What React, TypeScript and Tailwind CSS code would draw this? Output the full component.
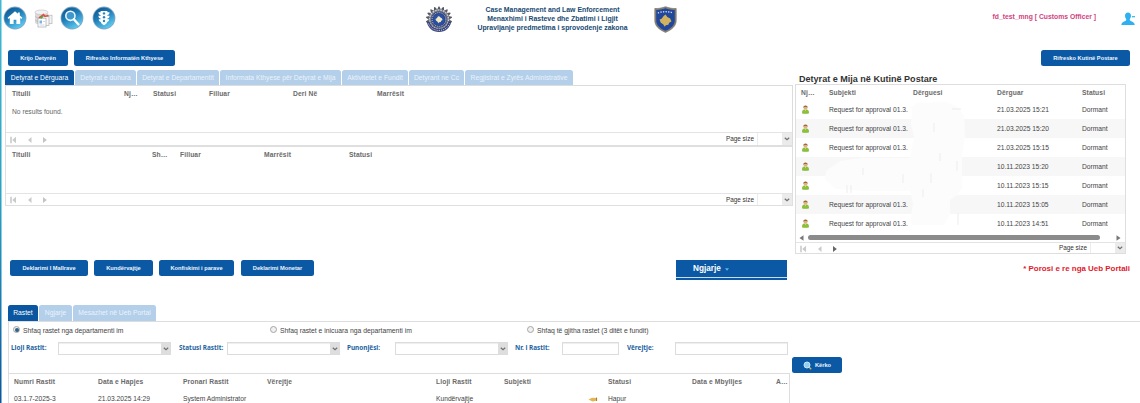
import React from "react";

function GlossyIcon({ id, children }: { id: string; children: React.ReactNode }) {
  return (
    <svg width="24" height="24" viewBox="0 0 24 24" className="shrink-0">
      <defs>
        <linearGradient id={id} x1="0" y1="0" x2="0.6" y2="1">
          <stop offset="0" stopColor="#0d4f86" />
          <stop offset="0.5" stopColor="#1f7db8" />
          <stop offset="1" stopColor="#5cc8ee" />
        </linearGradient>
      </defs>
      <circle cx="12" cy="12" r="11.4" fill="#7fa6c4" />
      <circle cx="12" cy="12" r="10.6" fill={`url(#${id})`} />
      {children}
    </svg>
  );
}

function HomeIcon() {
  return (
    <GlossyIcon id="g-home">
      <path d="M12 5.2 4.6 11.8l1 1.1 1.2-1V18h3.8v-4.2h2.8V18h3.8v-6.1l1.2 1 1-1.1-2.6-2.3V6.4h-1.9v1.4z" fill="#fff" />
    </GlossyIcon>
  );
}

function SearchIcon() {
  return (
    <GlossyIcon id="g-search">
      <circle cx="10.4" cy="9.8" r="4.6" fill="#3f97cc" stroke="#e9f6fd" strokeWidth="1.6" />
      <path d="m13.8 13.3 4.6 5" stroke="#fff" strokeWidth="2.4" strokeLinecap="round" />
    </GlossyIcon>
  );
}

function TrafficIcon() {
  return (
    <GlossyIcon id="g-traffic">
      <path d="M8.600 5h6.800v1.200h2.200c0 1.600-.9 2.500-2.200 2.800v.8h2.200c0 1.600-.9 2.500-2.200 2.800v.7h1.800c0 1.500-.8 2.200-2 2.600-.4 1.400-1.300 2.400-3.200 3.300-1.900-.9-2.800-1.900-3.200-3.300-1.200-.4-2-1.100-2-2.600h1.800v-.7c-1.300-.3-2.200-1.200-2.200-2.800h2.200V9C7.300 8.700 6.400 7.800 6.400 6.200h2.200z" fill="#fff" />
      <circle cx="12" cy="7.400" r="1.200" fill="#2b83bb" />
      <circle cx="12" cy="11.200" r="1.200" fill="#2b83bb" />
      <circle cx="12" cy="15" r="1.200" fill="#2b83bb" />
    </GlossyIcon>
  );
}

function ReportsIcon() {
  return (
    <svg width="19" height="19" viewBox="0 0 19 19" className="shrink-0">
      <path d="M1 3.500v10c0 1.200 2.800 2.200 6.500 2.200s6.500-1 6.500-2.200v-10z" fill="#d9d9d9" />
      <ellipse cx="7.500" cy="3.300" rx="6.500" ry="2.300" fill="#f2f2f2" stroke="#bdbdbd" strokeWidth=".6" />
      <path d="M1 7.200c1 1.500 4 2 6.500 2M1 10.800c1 1.300 3 1.900 5 2" stroke="#b5b5b5" strokeWidth=".7" fill="none" />
      <rect x="9.500" y="6.200" width="8.500" height="8.500" fill="#f3f3f3" stroke="#b5b5b5" strokeWidth=".7" />
      <rect x="7" y="7.600" width="8" height="8.800" fill="#f8f8f8" stroke="#b0b0b0" strokeWidth=".7" />
      <rect x="4" y="9.200" width="8" height="8.800" fill="#fff" stroke="#a8a8a8" strokeWidth=".7" />
      <path d="M5.500 11.500h2.500v3H5.500z" fill="#7fb2df" />
      <path d="M5.500 16h5M9 12.500h2" stroke="#bcd0e0" strokeWidth=".8" />
      <path d="M5 8.900 9.500 5.500l1.500 2L14.500 6.500" stroke="#e04f40" strokeWidth="1.500" fill="none" />
      <path d="M6.500 9.300 9 7.400" stroke="#4ea744" strokeWidth="1.700" />
    </svg>
  );
}

const KOSOVO = "M0-4.600 1.400-2.800 3.600-1.600 4.600.6 2.800 1.600 2.200 3.200.2 3.600-.6 4.800-1.800 2.800-3.600 1.600-4.600-.6-2.800-1.600-1.600-3.400z";

function CustomsEmblem() {
  const teeth = Array.from({ length: 11 }, (_, i) => -100 + i * 20);
  return (
    <svg width="28" height="28" viewBox="0 0 28 28" className="shrink-0">
      {teeth.map((a) => (
        <path key={a} d="M12.200 4.500 13.500 1.400h1l1.300 3.100z" fill="#55575f" transform={`rotate(${a} 14 14.500)`} />
      ))}
      <circle cx="14" cy="14.500" r="10.600" fill="#777b88" />
      <circle cx="14" cy="14.500" r="9.500" fill="none" stroke="#d4d5da" strokeWidth="1.200" strokeDasharray="1.500 1.200" />
      <circle cx="14" cy="14.500" r="8" fill="#33457f" />
      <circle cx="14" cy="14.500" r="6.900" fill="none" stroke="#c9cedd" strokeWidth="1" strokeDasharray="1 1" />
      <circle cx="14" cy="14.500" r="5.600" fill="#2850a6" />
      <path d={KOSOVO} fill="#f3e9c0" transform="translate(14 14.500) scale(.78)" />
      <path d="M1.800 17c1.300 6 5.800 10 12.200 10s10.900-4 12.200-10l-2.700-.6c-1.500 4.700-4.500 7.300-9.500 7.300s-8-2.600-9.500-7.300z" fill="#38457f" />
      <path d="M3.400 18.500c2 4.700 5.700 6.900 10.600 6.900s8.600-2.200 10.600-6.900" stroke="#c5c9d8" strokeWidth="1" strokeDasharray="1.200 1" fill="none" />
    </svg>
  );
}

function Shield() {
  return (
    <svg width="23" height="27" viewBox="0 0 23 27" className="shrink-0">
      <path d="M.8 2.500C4.500 2.700 8 2 11.500.7 15 2 18.500 2.700 22.200 2.500v12c0 5.500-4.500 9.300-10.700 11.900C5.300 23.800.8 20 .8 14.500z" fill="#8a8272" stroke="#69665f" strokeWidth=".6" />
      <path d="M2.200 3.900c3.300 0 6.300-.6 9.300-1.700 3 1.100 6 1.700 9.300 1.700v10.500c0 4.700-3.800 8-9.300 10.400-5.500-2.400-9.300-5.700-9.300-10.400z" fill="#20479b" />
      <path d="M3.800 6.900q7.700-2.400 15.400 0" stroke="#d8def0" strokeWidth="1.300" strokeDasharray="1.300 1.300" fill="none" />
      <path d={KOSOVO} fill="#d2b25e" transform="translate(11.500 14.600) scale(1.300)" />
    </svg>
  );
}

function UserIcon() {
  return (
    <svg width="15" height="14" viewBox="0 0 15 14" className="shrink-0">
      <path d="M7 .5c1.900 0 3 1.300 3 3.300 0 1.300-.5 2.500-1.200 3.200v1.300c.3 1 4.900 1.300 4.900 4.700H.4c0-3.400 4.500-3.700 4.800-4.700V7C4.500 6.300 4 5.100 4 3.800 4 1.800 5.100.5 7 .5z" fill="#2fb0f2" />
      <path d="M11 4.700h3" stroke="#2fb0f2" strokeWidth="1.200" />
    </svg>
  );
}

function PersonIcon() {
  return (
    <svg width="7" height="9" viewBox="0 0 8 10" className="mb-[2px] ml-[1px]">
      <path d="M.4 9.200C0 6.500 1 5.200 4 5.200s4 1.300 3.600 4q-3.600.8-7.200 0z" fill="#8cc430" stroke="#6aa026" strokeWidth=".5" />
      <circle cx="4" cy="3" r="2.300" fill="#e2b084" />
      <path d="M1.600 3C1.400 1.300 2.500.4 4 .4s2.600.9 2.400 2.600L5.300 2H2.900z" fill="#9a6a3a" />
      <path d="m3.200 5.300.8 1.500.8-1.500z" fill="#f5ecd0" />
    </svg>
  );
}

function Chevron() {
  return (
    <svg width="6" height="4" viewBox="0 0 6 4">
      <path d="m.8.8 2.200 2 2.200-2" fill="none" stroke="#707070" strokeWidth="1.200" />
    </svg>
  );
}

function Pager({ next = false, className }: { next?: boolean; className: string }) {
  return (
    <div className={`flex items-center border-t border-[#e4e4e4] ${className}`}>
      <svg width="40" height="8" viewBox="0 0 40 8" className="ml-1 mt-px">
        <path d="M1 .8v6.400" stroke="#b9b9b9" strokeWidth="1.200" />
        <path d="M6 .8v6.400L2.300 4zM21.500 1v6L18 4z" fill="#cacaca" />
        <path d="M33 1v6L36.800 4z" fill={next ? "#666" : "#c4c4c4"} />
      </svg>
      <span className="ml-auto mr-px pt-px text-[6.400px] text-[#333]">Page size</span>
      <div className="ml-[2px] flex h-full w-[35px] justify-end border-l border-[#ececec]">
        <div className="flex w-[10px] items-center justify-center bg-[#ebebeb]">
          <Chevron />
        </div>
      </div>
    </div>
  );
}

function Button({ className, children }: { className: string; children: React.ReactNode }) {
  return (
    <div className={`flex shrink-0 items-center justify-center whitespace-nowrap rounded-[2.500px] bg-[#0b59a5] pt-px text-[5.700px] font-bold text-[#eef5fb] ${className}`}>
      {children}
    </div>
  );
}

function Tab({ active = false, className, children }: { active?: boolean; className: string; children: React.ReactNode }) {
  return (
    <div className={`flex h-full shrink-0 items-center justify-center whitespace-nowrap rounded-t-[2.500px] pt-px text-[6.750px] ${active ? "bg-[#0b56a0] text-white" : "bg-[#b3cfea] text-[#eaf3fb]"} ${className}`}>
      {children}
    </div>
  );
}

function Row({ cells, className }: { cells: React.ReactNode[]; className: string }) {
  return (
    <div className={`grid items-center whitespace-nowrap pt-[2px] ${className}`}>
      {cells.map((c, i) => (
        <div key={i}>{c}</div>
      ))}
    </div>
  );
}

const HEAD = "text-[6.700px] font-bold tracking-[0.120px] text-[#6a6a6a]";

const MAIL: [string, string, string][] = [
  ["Request for approval 01.3.", "21.03.2025 15:21", "Dormant"],
  ["Request for approval 01.3.", "21.03.2025 15:20", "Dormant"],
  ["Request for approval 01.3.", "21.03.2025 15:15", "Dormant"],
  ["", "10.11.2023 15:20", "Dormant"],
  ["", "10.11.2023 15:15", "Dormant"],
  ["Request for approval 01.3.", "10.11.2023 15:05", "Dormant"],
  ["Request for approval 01.3.", "10.11.2023 14:51", "Dormant"],
];

function Inbox() {
  return (
    <div className="ml-[2px] w-[331px] shrink-0">
      <h2 className="flex h-[14px] items-center whitespace-nowrap pl-1 pt-[6px] text-[9.050px] font-bold text-[#333]">
        Detyrat e Mija në Kutinë Postare
      </h2>
      <div className="relative h-[170px] border border-[#dedede]">
        <Row cells={["Nj…", "Subjekti", "Dërguesi", "Dërguar", "Statusi"]} className={`h-[15px] grid-cols-[28px_84px_84px_85px_1fr] pl-[5px] ${HEAD}`} />
        {MAIL.map(([subject, sent, status], i) => (
          <Row
            key={i}
            cells={[<PersonIcon />, subject, "", sent, status]}
            className={`h-[19px] grid-cols-[28px_84px_84px_85px_1fr] pl-[5px] text-[6.700px] text-[#444] ${i % 2 ? "bg-[#f7f7f7]" : "bg-white"}`}
          />
        ))}
        <div className="flex h-[9px] items-center pl-[3px] pr-[4px]">
          <svg width="5" height="6" viewBox="0 0 5 6"><path d="M4.500.2v5.600L.5 3z" fill="#777" /></svg>
          <div className="ml-[4px] h-[5px] w-[292px] rounded-full bg-[#8b8b8b]" />
          <svg width="5" height="6" viewBox="0 0 5 6" className="ml-auto"><path d="M.5.2v5.600l4-2.800z" fill="#777" /></svg>
        </div>
        <Pager next className="h-[11px]" />
        <svg width="170" height="128" viewBox="0 0 170 128" className="absolute left-[26px] top-[16px]">
          <path d="M90 6 96 2 124 1l12 5 6 9 1 20-3 20 0 32-6 8-6 4v14l-6 11H90l-1-8 2-14-3-12H40L14 88 3 78 4 70l14-10 22-3h48l4-20-3-14z" fill="#fcfcfc" />
          <path d="M41 67v7M81 73v9M25 84v8M29 84v8M109 72v10M130 8h9M112 22v9M135 60v10M101 88v8M118 52v8M136 112v12" stroke="#ededed" strokeWidth="1" />
        </svg>
      </div>
    </div>
  );
}

function Radio({ checked = false, className, children }: { checked?: boolean; className: string; children: React.ReactNode }) {
  return (
    <div className={`flex shrink-0 items-center gap-[3px] whitespace-nowrap text-[6.800px] text-[#444] ${className}`}>
      <span className="flex size-[7px] items-center justify-center rounded-full border border-[#a5a5a5] bg-[#f0f0f0]">
        {checked && <span className="size-[4px] rounded-full bg-[#2f6288]" />}
      </span>
      <span className="pt-[2px]">{children}</span>
    </div>
  );
}

function Field({ label, select = false, className, inputClass }: { label: string; select?: boolean; className: string; inputClass: string }) {
  return (
    <div className={`flex shrink-0 items-center justify-between whitespace-nowrap ${className}`}>
      <span className="font-['Noto_Sans',sans-serif] text-[6.400px] font-bold text-[#1d629f]">{label}</span>
      <div className={`flex h-[13px] justify-end border border-[#dcdcdc] bg-white shadow-[inset_0_1px_1px_#eeeeee] ${inputClass}`}>
        {select && (
          <div className="flex w-[9px] items-center justify-center bg-[#dedede]">
            <Chevron />
          </div>
        )}
      </div>
    </div>
  );
}

const CASE_COLS = "grid-cols-[84px_85px_84px_169px_68px_84px_20px_84px_84px_1fr] pl-[5px]";

export default function App() {
  return (
    <div className="flex h-[403px] w-[1140px] flex-col overflow-hidden bg-white bg-[linear-gradient(#40b9d2,#2aa2c4_50%,#0b559c)] bg-[length:1.500px_100%] bg-no-repeat font-['Liberation_Sans',Arial,sans-serif] leading-none">
      <header className="flex h-[50px] shrink-0 items-start">
        <div className="flex w-[425px] items-center pl-[3px] pt-[6px]">
          <HomeIcon />
          <div className="ml-[7px] mr-[7px] flex"><ReportsIcon /></div>
          <SearchIcon />
          <div className="ml-[8px] flex"><TrafficIcon /></div>
        </div>
        <div className="flex w-[254px] items-start justify-between">
          <div className="pt-[5px]"><CustomsEmblem /></div>
          <h1 className="whitespace-nowrap pr-[2px] pt-[5px] text-center text-[6.900px] font-bold leading-[9.200px] text-[#174a72]">
            Case Management and Law Enforcement<br />
            Menaxhimi i Rasteve dhe Zbatimi i Ligjit<br />
            Upravljanje predmetima i sprovodenje zakona
          </h1>
          <div className="pr-[2px] pt-[6px]"><Shield /></div>
        </div>
        <div className="flex flex-1 items-start justify-end pr-[4px]">
          <span className="mr-[25px] whitespace-nowrap pt-[14px] text-[6.800px] font-bold text-[#d0427f]">fd_test_mng [ Customs Officer ]</span>
          <div className="pt-[12px]"><UserIcon /></div>
        </div>
      </header>

      <div className="flex h-[20px] shrink-0 items-start pl-[8px] pr-[10px]">
        <Button className="h-[16px] w-[60px]">Krijo Detyrën</Button>
        <Button className="ml-[6px] h-[16px] w-[101px]">Rifresko Informatën Kthyese</Button>
        <Button className="ml-auto h-[16px] w-[89px]">Rifresko Kutinë Postare</Button>
      </div>

      <div className="flex h-[190px] shrink-0 pl-[5px]">
        <div className="w-[788px] shrink-0">
          <div className="flex h-[15px] gap-px">
            <Tab active className="w-[69px]">Detyrat e Dërguara</Tab>
            <Tab className="w-[61px]">Detyrat e duhura</Tab>
            <Tab className="w-[82px]">Detyrat e Departamentit</Tab>
            <Tab className="w-[121px]">Informata Kthyese për Detyrat e Mija</Tab>
            <Tab className="w-[66px]">Aktivitetet e Fundit</Tab>
            <Tab className="w-[55px]">Detyrant ne Cc</Tab>
            <Tab className="w-[108px]">Regjistrat e Zyrës Administrative</Tab>
          </div>
          <div className="h-[60px] border-x border-t border-[#dcdcdc]">
            <Row cells={["Titulli", "Nj…", "Statusi", "Filluar", "Deri Në", "Marrësit"]} className={`h-[15px] grid-cols-[112px_29px_56px_84px_84px_1fr] pl-[6px] ${HEAD}`} />
            <div className="h-[31px] pl-[6px] pt-[8px] text-[6.700px] text-[#666]">No results found.</div>
            <Pager className="h-[13px]" />
          </div>
          <div className="h-[61px] border border-t-2 border-[#dfdfdf]">
            <Row cells={["Titulli", "Sh…", "Filluar", "Marrësit", "Statusi"]} className={`h-[14px] grid-cols-[140px_28px_84px_85px_1fr] pl-[6px] ${HEAD}`} />
            <div className="h-[32px]" />
            <Pager className="h-[12px]" />
          </div>
        </div>
        <Inbox />
      </div>

      <div className="flex h-[45px] shrink-0 items-start pl-[10px] pr-[10px]">
        <Button className="h-[16px] w-[78px]">Deklarimi I Mallrave</Button>
        <Button className="ml-[6px] h-[16px] w-[59px]">Kundërvajtje</Button>
        <Button className="ml-[6px] h-[16px] w-[75px]">Konfiskimi i parave</Button>
        <Button className="ml-[7px] h-[16px] w-[73px]">Deklarimi Monetar</Button>
        <div className="ml-[362px] h-[20px] w-[111px] bg-[#0b59a5]">
          <div className="flex h-[18px] items-center border-b border-[#c8ddef] pl-[17px] pt-[2px] text-[8.200px] font-bold text-white">
            Ngjarje
            <svg width="4" height="3" viewBox="0 0 4 3" className="ml-[4px]"><path d="M0 .3h4L2 2.700z" fill="#5ab8ea" /></svg>
          </div>
        </div>
        <div className="ml-auto whitespace-nowrap pt-[5px] text-[7.950px] font-bold text-[#e2182a]">* Porosi e re nga Ueb Portali</div>
      </div>

      <div className="flex h-[16px] shrink-0 gap-px pl-[8px]">
        <Tab active className="w-[30px]">Rastet</Tab>
        <Tab className="w-[33px]">Ngjarje</Tab>
        <Tab className="w-[83px]">Mesazhet në Ueb Portal</Tab>
      </div>
      <div className="ml-[8px] h-[82px] shrink-0 border-l border-t border-[#dddddd]">
        <div className="flex h-[16px] items-center pl-[4px]">
          <Radio checked className="w-[257px]">Shfaq rastet nga departamenti im</Radio>
          <Radio className="w-[257px]">Shfaq rastet e inicuara nga departamenti im</Radio>
          <Radio className="w-[140px]">Shfaq të gjitha rastet (3 ditët e fundit)</Radio>
        </div>
        <div className="flex pl-[2px] pt-[4px]">
          <Field select label="Lloji Rastit:" className="w-[160px]" inputClass="w-[113px]" />
          <Field select label="Statusi Rastit:" className="ml-[8px] w-[161px]" inputClass="w-[113px]" />
          <Field select label="Punonjësi:" className="ml-[7px] w-[161px]" inputClass="w-[113px]" />
          <Field label="Nr. i Rastit:" className="ml-[7px] w-[104px]" inputClass="w-[57px]" />
          <Field label="Vërejtje:" className="ml-[8px] w-[161px]" inputClass="w-[113px]" />
        </div>
        <div className="flex items-start">
          <div className="mt-[18px] h-[30px] w-[781px] border-r border-t border-[#dddddd]">
            <Row cells={["Numri Rastit", "Data e Hapjes", "Pronari Rastit", "Vërejtje", "Lloji Rastit", "Subjekti", "", "Statusi", "Data e Mbylljes", "A…"]} className={`h-[15px] ${CASE_COLS} ${HEAD}`} />
            <Row
              cells={[
                "03.1.7-2025-3",
                "21.03.2025 14:29",
                "System Administrator",
                "",
                "Kundërvajtje",
                "",
                <svg width="10" height="5" viewBox="0 0 10 5">
                  <path d="M.5 2.500 4 .8l5 .2v2.600l-4.500.8z" fill="#e5b455" />
                  <path d="M8.600.6v3.400" stroke="#a8752b" strokeWidth="1" />
                </svg>,
                "Hapur",
                "",
                "",
              ]}
              className={`h-[18px] text-[6.700px] text-[#444] ${CASE_COLS}`}
            />
          </div>
          <Button className="ml-[2px] mt-[2px] h-[16px] w-[50px] gap-[3px]">
            <svg width="9" height="9" viewBox="0 0 9 9">
              <path d="m6 6 2.200 2.200" stroke="#e0b050" strokeWidth="1.400" />
              <circle cx="4" cy="4" r="3" fill="#8fd0f5" stroke="#c9e6f8" strokeWidth="1" />
            </svg>
            Kërko
          </Button>
        </div>
      </div>
    </div>
  );
}
